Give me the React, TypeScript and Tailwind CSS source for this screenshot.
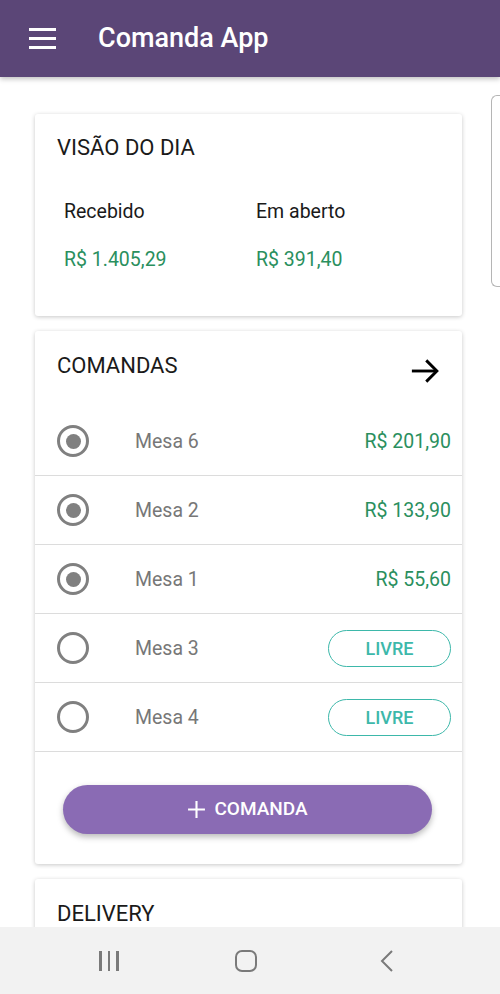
import React from 'react'

// Comanda App – home screen (visão do dia, comandas, delivery)

type Mesa = {
  nome: string
  valor?: string
}

const mesas: Mesa[] = [
  { nome: 'Mesa 6', valor: 'R$ 201,90' },
  { nome: 'Mesa 2', valor: 'R$ 133,90' },
  { nome: 'Mesa 1', valor: 'R$ 55,60' },
  { nome: 'Mesa 3' },
  { nome: 'Mesa 4' },
]

const Radio: React.FC<{ checked: boolean }> = ({ checked }) => (
  <div className="flex h-[32px] w-[32px] shrink-0 items-center justify-center rounded-full border-[3.5px] border-[#808080]">
    {checked && <div className="h-[15px] w-[15px] rounded-full bg-[#808080]" />}
  </div>
)

const Card: React.FC<{ children: React.ReactNode; className?: string }> = ({
  children,
  className = '',
}) => (
  <div
    className={`w-[427px] shrink-0 rounded-[3px] bg-white shadow-[0_1px_4px_rgba(0,0,0,0.22)] ${className}`}
  >
    {children}
  </div>
)

export default function App() {
  return (
    <div
      className="relative flex h-[994px] w-[500px] flex-col overflow-hidden bg-white"
      style={{ fontFamily: 'Roboto, "Noto Sans", sans-serif' }}
    >
      {/* App bar */}
      <header className="relative z-10 flex h-[77px] shrink-0 items-center bg-[#5b4677] shadow-[0_2px_5px_rgba(0,0,0,0.25)]">
        <div className="ml-[29px] flex w-[27px] flex-col gap-[6px]">
          <span className="h-[3px] w-full bg-white" />
          <span className="h-[3px] w-full bg-white" />
          <span className="h-[3px] w-full bg-white" />
        </div>
        <h1 className="ml-[42px] text-[27px] font-medium text-white">Comanda App</h1>
      </header>

      {/* Content */}
      <main className="flex min-h-0 flex-1 flex-col gap-[15px] overflow-hidden pl-[35px] pt-[37px]">
        {/* Visão do dia */}
        <Card className="h-[202px] px-[22px] pt-[22px]">
          <h2 className="text-[22px] leading-[24px] text-[#1a1a1a]">VISÃO DO DIA</h2>
          <div className="mt-[41px] grid grid-cols-[192px_1fr] pl-[7px]">
            <div>
              <p className="text-[19.5px] leading-[22px] text-[#1a1a1a]">Recebido</p>
              <p className="mt-[26px] text-[19.5px] leading-[22px] text-[#2a8f5e]">R$ 1.405,29</p>
            </div>
            <div>
              <p className="text-[19.5px] leading-[22px] text-[#1a1a1a]">Em aberto</p>
              <p className="mt-[26px] text-[19.5px] leading-[22px] text-[#2a8f5e]">R$ 391,40</p>
            </div>
          </div>
        </Card>

        {/* Comandas */}
        <Card className="pb-[30px]">
          <div className="flex h-[76px] items-start justify-between px-[22px] pt-[23px]">
            <h2 className="text-[22px] leading-[24px] text-[#1a1a1a]">COMANDAS</h2>
            <svg
              width="30"
              height="30"
              viewBox="0 0 24 24"
              className="mt-[2px]"
              fill="none"
              stroke="#000"
              strokeWidth="2.3"
              strokeLinecap="butt"
            >
              <path d="M1.5 12h20" />
              <path d="M13 3.5l8.5 8.5-8.5 8.5" />
            </svg>
          </div>

          {mesas.map((m) => (
            <div
              key={m.nome}
              className="flex h-[69px] items-center border-b border-[#dcdcdc] pl-[22px] pr-[11px]"
            >
              <Radio checked={!!m.valor} />
              <span className="ml-[46px] mt-[2px] flex-1 text-[19.5px] text-[#777777]">{m.nome}</span>
              {m.valor ? (
                <span className="mt-[2px] text-[19.5px] text-[#2a8f5e]">{m.valor}</span>
              ) : (
                <span className="flex h-[37px] w-[123px] items-center justify-center rounded-full border-[1.5px] border-[#3db8aa] text-[18px] font-medium text-[#3db8aa]">
                  LIVRE
                </span>
              )}
            </div>
          ))}

          <div className="pl-[28px] pr-[30px] pt-[33px]">
            <button className="flex h-[49px] w-full items-center justify-center gap-[8px] rounded-full bg-[#8a6bb4] text-[19px] font-medium text-white shadow-[0_3px_6px_rgba(0,0,0,0.28)]">
              <svg width="19" height="19" viewBox="0 0 18 18" stroke="#fff" strokeWidth="2">
                <path d="M9 1v16M1 9h16" />
              </svg>
              COMANDA
            </button>
          </div>
        </Card>

        {/* Delivery */}
        <Card className="h-[120px] px-[22px] pt-[23px]">
          <h2 className="text-[22px] leading-[24px] text-[#1a1a1a]">DELIVERY</h2>
        </Card>
      </main>

      {/* Edge panel handle */}
      <div className="absolute right-0 top-[95px] h-[192px] w-[9px] rounded-l-[6px] border border-r-0 border-[#b5b5b5] bg-white" />

      {/* System navigation bar */}
      <nav className="flex h-[67px] shrink-0 items-center bg-[#f2f2f2]">
        <div className="ml-[99px] flex h-[20px] gap-[6px]">
          <span className="h-full w-[2.5px] bg-[#7a7a7a]" />
          <span className="h-full w-[2.5px] bg-[#7a7a7a]" />
          <span className="h-full w-[2.5px] bg-[#7a7a7a]" />
        </div>
        <div className="ml-[116px] h-[22px] w-[22px] rounded-[7px] border-2 border-[#7a7a7a]" />
        <svg
          width="14"
          height="24"
          viewBox="0 0 14 24"
          className="ml-[123px]"
          fill="none"
          stroke="#7a7a7a"
          strokeWidth="2"
        >
          <path d="M12 2L2 12l10 10" />
        </svg>
      </nav>
    </div>
  )
}
